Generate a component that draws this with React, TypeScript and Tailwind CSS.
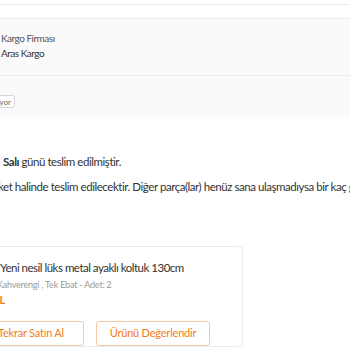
export default function App() {
  return (
    <div
      className="w-[350px] h-[350px] overflow-hidden bg-white text-[#333]"
      style={{ fontFamily: "Lato, 'Noto Sans', sans-serif" }}
    >
      {/* Kargo box */}
      <div className="pt-[4px]">
        <div className="border-t border-[#ececec] h-[14px]" />
        <div className="border-t border-[#ececec] bg-[#fafafa] h-[57px] pt-[12px] text-[10px] leading-[15px] tracking-[-0.5px]">
          <div className="ml-[1px] text-[#555]">Kargo Firması</div>
          <div className="ml-[1px] text-[#333]">Aras Kargo</div>
        </div>
        <div className="border-t border-[#ececec] bg-[#fafafa] h-[42px] pt-[19px]">
          <div className="-ml-[20px] w-[35px] h-[13px] rounded-[3px] border border-[#d6d6d6] bg-white flex items-center justify-end pr-[3px] text-[8px] text-[#666]">
            yor
          </div>
        </div>
      </div>

      {/* Teslim info */}
      <div className="mt-[37px] text-[11.5px] leading-[16px] tracking-[-0.45px]">
        <div className="ml-[3px]">
          <span className="font-bold">Salı</span> günü teslim edilmiştir.
        </div>
        <div className="mt-[9px] -ml-[2px] whitespace-nowrap">
          ket halinde teslim edilecektir. Diğer parça(lar) henüz sana ulaşmadıysa bir kaç gün içinde teslim edilecektir.
        </div>
      </div>

      {/* Product card */}
      <div className="mt-[51px] -ml-[20px] w-[263px] rounded-[4px] border border-[#ebebeb] pt-[13px] pl-[21px]">
        <div className="-ml-[2px] text-[11.5px] leading-[16px] tracking-[-0.5px] text-[#333]">Yeni nesil lüks metal ayaklı koltuk 130cm</div>
        <div className="mt-[2px] -ml-[5px] text-[9px] leading-[14px] tracking-[-0.2px] text-[#999]">Kahverengi , Tek Ebat - Adet: 2</div>
        <div className="-ml-[9px] text-[11px] leading-[16px] font-bold text-[#f27a1a]">TL</div>
        <div className="mt-[13px] flex gap-[12px] -ml-[21px]">
          <button className="w-[103px] h-[25px] rounded-[3px] border border-[#f5c7a3] text-[11px] tracking-[-0.2px] text-[#f27a1a] flex items-center justify-end pr-[19px]">
            Tekrar Satın Al
          </button>
          <button className="w-[114px] h-[25px] rounded-[3px] border border-[#f5c7a3] text-[11px] tracking-[-0.2px] text-[#f27a1a] flex items-center justify-center">
            Ürünü Değerlendir
          </button>
        </div>
      </div>
    </div>
  );
}
